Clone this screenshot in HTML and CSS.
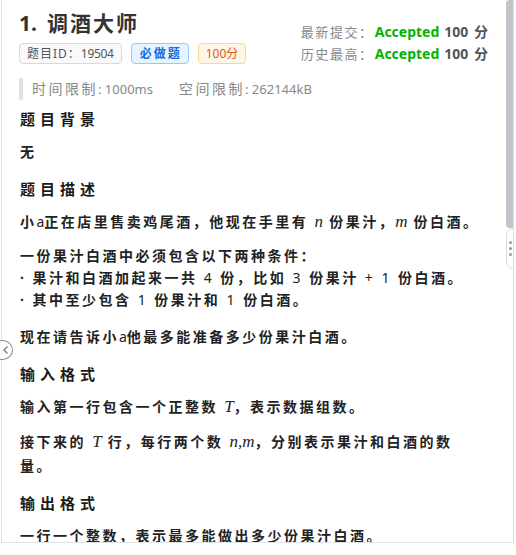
FILE: index.html
```html
<!DOCTYPE html>
<html lang="zh-CN">
<head>
    <meta charset="UTF-8">
    <meta name="viewport" content="width=device-width, initial-scale=1.0">
    <title>调酒大师</title>
    <link rel="stylesheet" href="styles.css">
</head>
<body>
    <div class="panel">
        <div class="scroll-thumb"></div>
        <div class="drag-handle"><span></span><span></span><span></span></div>

        <div class="header">
            <div class="header-left">
                <h1 class="title"><span class="num">1.</span>调酒大师</h1>
                <div class="tags">
                    <span class="tag tag-id"><span class="tag-cjk">题目ID：</span>19504</span>
                    <span class="tag tag-must">必做题</span>
                    <span class="tag tag-score">100分</span>
                </div>
            </div>
            <div class="stats">
                <div class="stat-row"><span class="stat-label">最新提交：</span><span class="ac">Accepted</span><span class="pts">100 分</span></div>
                <div class="stat-row"><span class="stat-label">历史最高：</span><span class="ac">Accepted</span><span class="pts">100 分</span></div>
            </div>
        </div>

        <div class="limits">
            <span class="limit"><span class="limit-label">时间限制</span>: 1000ms</span>
            <span class="limit"><span class="limit-label">空间限制</span>: 262144kB</span>
        </div>

        <div class="content">
            <h2 class="section-title first">题目背景</h2>
            <p>无</p>

            <h2 class="section-title">题目描述</h2>
            <p>小<span class="latin">a</span>正在店里售卖鸡尾酒，他现在手里有 <span class="math">n</span> 份果汁，<span class="math">m</span> 份白酒。</p>
            <div class="rules">
                <div>一份果汁白酒中必须包含以下两种条件：</div>
                <div>· 果汁和白酒加起来一共 <span class="digit">4</span> 份，比如 <span class="digit">3</span> 份果汁 <span class="digit">+ 1</span> 份白酒。</div>
                <div>· 其中至少包含 <span class="digit">1</span> 份果汁和 <span class="digit">1</span> 份白酒。</div>
            </div>
            <p>现在请告诉小<span class="latin">a</span>他最多能准备多少份果汁白酒。</p>

            <h2 class="section-title">输入格式</h2>
            <p>输入第一行包含一个正整数 <span class="math">T</span>，表示数据组数。</p>
            <p>接下来的 <span class="math">T</span> 行，每行两个数 <span class="math">n,m</span>，分别表示果汁和白酒的数量。</p>

            <h2 class="section-title">输出格式</h2>
            <p>一行一个整数，表示最多能做出多少份果汁白酒。</p>
        </div>
    </div>

    <div class="collapse-btn">
        <svg width="10" height="10" viewBox="0 0 10 10"><path d="M6.5 1.5 L3 5 L6.5 8.5" fill="none" stroke="#777" stroke-width="1.3"/></svg>
    </div>
</body>
</html>
```

FILE: styles.css
```css
body {
    margin: 0;
    background: #ffffff;
    font-family: "Noto Sans", "Noto Sans CJK SC", sans-serif;
    color: #222;
    position: relative;
    height: 555px;
    overflow: hidden;
}

.panel {
    position: relative;
    margin-left: 1px;
    width: 513px;
    height: 543px;
    border: 1px solid #e2e2e2;
    border-top: none;
    overflow: hidden;
    padding: 9px 30px 0 17px;
    box-sizing: border-box;
}

/* fake scrollbar + drag handle on the right */
.scroll-thumb {
    position: absolute;
    top: 0;
    right: 0;
    width: 7px;
    height: 228px;
    background: #c3c3ca;
    border-radius: 4px 0 0 4px;
}

.drag-handle {
    position: absolute;
    top: 228px;
    right: -4px;
    width: 9px;
    height: 39px;
    background: #fff;
    border: 1px solid #dcdcdc;
    border-radius: 7px 0 0 7px;
    display: flex;
    flex-direction: column;
    justify-content: center;
    align-items: center;
    gap: 3px;
}

.drag-handle span {
    width: 3px;
    height: 3px;
    border-radius: 50%;
    background: #999;
    margin-right: 2px;
}

.collapse-btn {
    position: absolute;
    left: -8px;
    top: 340px;
    width: 18px;
    height: 18px;
    border: 1.5px solid #8a8a8a;
    border-radius: 50%;
    background: #fff;
    display: flex;
    align-items: center;
    justify-content: flex-end;
    padding-right: 1px;
}

/* header */
.header {
    display: flex;
    justify-content: space-between;
}

.title {
    margin: 0;
    font-size: 21px;
    line-height: 28px;
    font-weight: 700;
    color: #333;
    letter-spacing: 2px;
}

.title .num {
    margin-right: 10px;
    letter-spacing: 0;
}

.tags {
    display: flex;
    gap: 9px;
    margin-top: 6px;
}

.tag {
    height: 21px;
    line-height: 19px;
    box-sizing: border-box;
    padding: 0 7px;
    border: 1px solid #d9d9d9;
    border-radius: 4px;
    font-size: 12px;
}

.tag-id {
    background: #fafafa;
    color: #555;
    letter-spacing: -0.3px;
}

.tag-cjk {
    letter-spacing: 1px;
}

.tag-must {
    background: #e6f4ff;
    border-color: #91caff;
    color: #1668dc;
    font-weight: 700;
    letter-spacing: 2px;
    padding: 0 6px 0 8px;
}

.tag-score {
    background: #fff7e6;
    border-color: #ffd591;
    color: #e0561b;
}

.stats {
    padding-top: 12px;
    margin-right: -5px;
}

.stat-row {
    display: flex;
    justify-content: flex-end;
    line-height: 22px;
    font-size: 14px;
    font-weight: 700;
}

.stat-label {
    font-size: 13px;
    font-weight: 400;
    color: #888;
    letter-spacing: 1.6px;
    margin-right: 1px;
}

.ac {
    color: #00b400;
    margin-right: 5px;
}

.pts {
    color: #555;
    word-spacing: 2px;
}

/* limits */
.limits {
    margin-top: 13px;
    border-left: 4px solid #e3e3e3;
    padding-left: 9px;
    height: 22px;
    line-height: 22px;
    font-size: 13px;
    color: #888;
    display: flex;
    gap: 26px;
}

.limit-label {
    font-size: 14px;
    letter-spacing: 2.5px;
}

/* problem statement */
.content {
    padding-left: 1px;
}

.section-title {
    margin: 13px 0 9px;
    font-size: 15px;
    line-height: 24px;
    font-weight: 700;
    letter-spacing: 5px;
    color: #1a1a1a;
}

.section-title.first {
    margin-top: 7px;
}

.content p {
    margin: 0 0 11px;
    font-size: 14px;
    line-height: 24px;
    font-weight: 700;
    letter-spacing: 2.5px;
}

.rules {
    margin: 0 0 14px;
    font-size: 14px;
    line-height: 22px;
    font-weight: 700;
    letter-spacing: 2.5px;
}

.latin {
    font-weight: 400;
    letter-spacing: 0;
}

.digit {
    font-weight: 400;
}

.math {
    font-family: "Liberation Serif", "DejaVu Serif", serif;
    font-style: italic;
    font-weight: 400;
    font-size: 17px;
    line-height: 1;
    letter-spacing: 0;
}
```
